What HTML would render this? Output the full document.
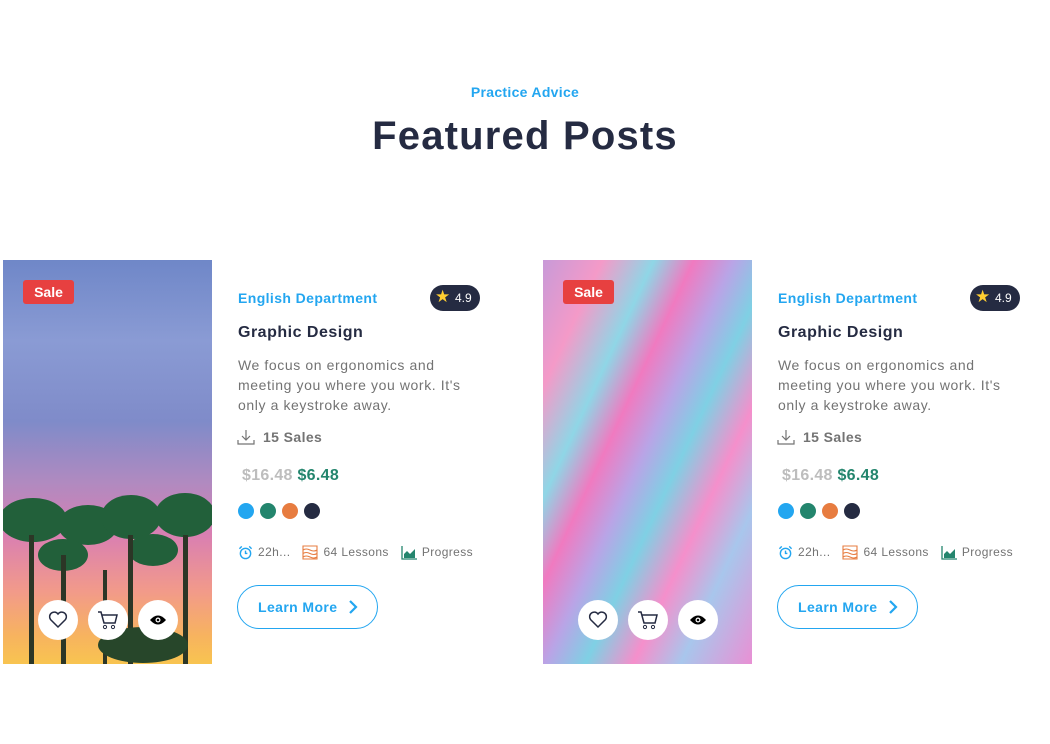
<!DOCTYPE html>
<html><head><meta charset="utf-8"><style>
*{margin:0;padding:0;box-sizing:border-box}
body{width:1050px;height:744px;background:#fff;font-family:"Liberation Sans",sans-serif;position:relative;overflow:hidden}
.a{position:absolute}
.sub{left:0;width:1050px;top:84px;text-align:center;color:#23a6f0;font-weight:bold;font-size:14px;letter-spacing:.3px}
.h{left:0;width:1050px;top:114px;text-align:center;color:#252b42;font-weight:bold;font-size:40px;letter-spacing:1.2px}
.img{top:260px;width:209px;height:404px;overflow:hidden}
.sale{left:20px;top:20px;width:51px;height:24px;background:#e74040;color:#fff;font-weight:bold;font-size:14px;text-align:center;line-height:24px;border-radius:3px}
.btn{top:340px;width:40px;height:40px;border-radius:50%;background:#fff;display:flex;align-items:center;justify-content:center}
.dept{color:#23a6f0;font-weight:bold;font-size:14px;top:290px;letter-spacing:.4px}
.rate{top:285px;width:50px;height:26px;border-radius:13px;background:#252b42;color:#fff;font-size:12px;line-height:26px;padding-left:25px}
.rate:before{content:"★";position:absolute;left:5px;top:-1px;color:#ffce31;font-size:17px}
.t{top:324px;color:#252b42;font-weight:bold;font-size:16px;letter-spacing:.5px}
.d{top:355px;width:244px;color:#737373;font-size:14px;line-height:20px;letter-spacing:.6px}
.s{top:429px;color:#737373;font-weight:bold;font-size:14px;padding-left:26px;letter-spacing:.4px}
.p{top:467px;font-weight:bold;font-size:16px;color:#bdbdbd;letter-spacing:.3px}
.p b{color:#23856d}
.dot{top:503px;width:16px;height:16px;border-radius:50%}
.m{top:544px;color:#737373;font-size:12px;white-space:nowrap;letter-spacing:.4px;display:flex;align-items:center;height:16px}
.m svg{margin-right:5px}
.lm{top:585px;width:141px;height:44px;border:1px solid #23a6f0;border-radius:22px;color:#23a6f0;font-weight:bold;font-size:14px;line-height:42px;padding-left:20px;letter-spacing:.4px}
</style></head><body>
<div class="a sub">Practice Advice</div>
<div class="a h">Featured Posts</div>

<div class="a img" style="left:3px;background:linear-gradient(180deg,#6f87c8 0%,#8a9bd4 20%,#7f8bc9 40%,#b08ac0 55%,#d97fb2 68%,#f29a8a 82%,#f7b35f 93%,#f8c450 100%)">
<svg class="a" style="left:0;top:215px" width="209" height="189"><g fill="#22603a"><ellipse cx="30" cy="45" rx="34" ry="22"/><ellipse cx="85" cy="50" rx="30" ry="20"/><ellipse cx="128" cy="42" rx="30" ry="22"/><ellipse cx="182" cy="40" rx="30" ry="22"/><ellipse cx="60" cy="80" rx="25" ry="16"/><ellipse cx="150" cy="75" rx="25" ry="16"/></g><g fill="#2c3626"><rect x="26" y="60" width="5" height="129"/><rect x="58" y="80" width="5" height="109"/><rect x="125" y="60" width="5" height="129"/><rect x="180" y="60" width="5" height="129"/><rect x="100" y="95" width="4" height="94"/></g><ellipse cx="140" cy="170" rx="45" ry="18" fill="#27462a"/></svg>
<div class="a sale">Sale</div>
<div class="a btn" style="left:35px"><svg width="20" height="18" viewBox="0 0 20 18"><path d="M10 16 2.5 8.5A4.5 4.5 0 0 1 10 3a4.5 4.5 0 0 1 7.5 5.5Z" fill="none" stroke="#252b42" stroke-width="1.5"/></svg></div>
<div class="a btn" style="left:85px"><svg width="22" height="20" viewBox="0 0 22 20"><path d="M1 2h3l3 11h11l2-8H5" fill="none" stroke="#252b42" stroke-width="1.5"/><circle cx="8" cy="17" r="1.6" fill="none" stroke="#252b42"/><circle cx="16" cy="17" r="1.6" fill="none" stroke="#252b42"/></svg></div>
<div class="a btn" style="left:135px"><svg width="18" height="12" viewBox="0 0 18 12"><path d="M1 6Q9-3 17 6 9 15 1 6Z" fill="#000"/><circle cx="9" cy="6" r="2.5" fill="#fff"/><circle cx="9" cy="6" r="1.3" fill="#000"/></svg></div>
</div>

<div class="a img" style="left:543px;background:linear-gradient(115deg,#c89ad8 0%,#f49ac8 15%,#8fd6e6 28%,#f07ac0 38%,#b9a4e6 48%,#7fd0e4 58%,#f58fcb 70%,#a8c6ec 82%,#e990d4 100%)">
<div class="a sale">Sale</div>
<div class="a btn" style="left:35px"><svg width="20" height="18" viewBox="0 0 20 18"><path d="M10 16 2.5 8.5A4.5 4.5 0 0 1 10 3a4.5 4.5 0 0 1 7.5 5.5Z" fill="none" stroke="#252b42" stroke-width="1.5"/></svg></div>
<div class="a btn" style="left:85px"><svg width="22" height="20" viewBox="0 0 22 20"><path d="M1 2h3l3 11h11l2-8H5" fill="none" stroke="#252b42" stroke-width="1.5"/><circle cx="8" cy="17" r="1.6" fill="none" stroke="#252b42"/><circle cx="16" cy="17" r="1.6" fill="none" stroke="#252b42"/></svg></div>
<div class="a btn" style="left:135px"><svg width="18" height="12" viewBox="0 0 18 12"><path d="M1 6Q9-3 17 6 9 15 1 6Z" fill="#000"/><circle cx="9" cy="6" r="2.5" fill="#fff"/><circle cx="9" cy="6" r="1.3" fill="#000"/></svg></div>
</div>

<div class="a dept" style="left:238px">English Department</div>
<div class="a rate" style="left:430px">4.9</div>
<div class="a t" style="left:238px">Graphic Design</div>
<div class="a d" style="left:238px">We focus on ergonomics and meeting you where you work. It's only a keystroke away.</div>
<div class="a s" style="left:237px"><svg class="a" style="left:0;top:0" width="18" height="16" viewBox="0 0 18 16"><path d="M9 1v10M5 7l4 4 4-4M1 11v4h16v-4" fill="none" stroke="#737373" stroke-width="1.2"/></svg>15 Sales</div>
<div class="a p" style="left:242px">$16.48 <b>$6.48</b></div>
<div class="a dot" style="left:238px;background:#23a6f0"></div><div class="a dot" style="left:260px;background:#23856d"></div><div class="a dot" style="left:282px;background:#e77c40"></div><div class="a dot" style="left:304px;background:#252b42"></div>
<div class="a m" style="left:238px"><svg width="15" height="15" viewBox="0 0 16 16"><circle cx="8" cy="9" r="5.5" fill="none" stroke="#23a6f0" stroke-width="1.5"/><path d="M8 6v3h2M1.5 4 4 1.5M14.5 4 12 1.5" fill="none" stroke="#23a6f0" stroke-width="1.5"/></svg>22h...<span style="width:12px"></span><svg width="16" height="15" viewBox="0 0 16 15"><path d="M1 1h14v13H1Z M1 5q3-2 7 0t7 0M1 8.5q3-2 7 0t7 0M1 12q3-2 7 0t7 0" fill="none" stroke="#e77c40" stroke-width="1.1"/></svg>64 Lessons<span style="width:12px"></span><svg width="16" height="15" viewBox="0 0 16 15"><path d="M1 1v13h15" fill="none" stroke="#23856d" stroke-width="1.3"/><path d="M3 13V9l3-3 3 3 5-5v9Z" fill="#23856d"/></svg>Progress</div>
<div class="a lm" style="left:237px">Learn More <svg style="position:absolute;left:110px;top:14px" width="10" height="14" viewBox="0 0 10 14"><path d="M2 1l6 6-6 6" fill="none" stroke="#23a6f0" stroke-width="2.2"/></svg></div>

<div class="a dept" style="left:778px">English Department</div>
<div class="a rate" style="left:970px">4.9</div>
<div class="a t" style="left:778px">Graphic Design</div>
<div class="a d" style="left:778px">We focus on ergonomics and meeting you where you work. It's only a keystroke away.</div>
<div class="a s" style="left:777px"><svg class="a" style="left:0;top:0" width="18" height="16" viewBox="0 0 18 16"><path d="M9 1v10M5 7l4 4 4-4M1 11v4h16v-4" fill="none" stroke="#737373" stroke-width="1.2"/></svg>15 Sales</div>
<div class="a p" style="left:782px">$16.48 <b>$6.48</b></div>
<div class="a dot" style="left:778px;background:#23a6f0"></div><div class="a dot" style="left:800px;background:#23856d"></div><div class="a dot" style="left:822px;background:#e77c40"></div><div class="a dot" style="left:844px;background:#252b42"></div>
<div class="a m" style="left:778px"><svg width="15" height="15" viewBox="0 0 16 16"><circle cx="8" cy="9" r="5.5" fill="none" stroke="#23a6f0" stroke-width="1.5"/><path d="M8 6v3h2M1.5 4 4 1.5M14.5 4 12 1.5" fill="none" stroke="#23a6f0" stroke-width="1.5"/></svg>22h...<span style="width:12px"></span><svg width="16" height="15" viewBox="0 0 16 15"><path d="M1 1h14v13H1Z M1 5q3-2 7 0t7 0M1 8.5q3-2 7 0t7 0M1 12q3-2 7 0t7 0" fill="none" stroke="#e77c40" stroke-width="1.1"/></svg>64 Lessons<span style="width:12px"></span><svg width="16" height="15" viewBox="0 0 16 15"><path d="M1 1v13h15" fill="none" stroke="#23856d" stroke-width="1.3"/><path d="M3 13V9l3-3 3 3 5-5v9Z" fill="#23856d"/></svg>Progress</div>
<div class="a lm" style="left:777px">Learn More <svg style="position:absolute;left:110px;top:14px" width="10" height="14" viewBox="0 0 10 14"><path d="M2 1l6 6-6 6" fill="none" stroke="#23a6f0" stroke-width="2.2"/></svg></div>
</body></html>
